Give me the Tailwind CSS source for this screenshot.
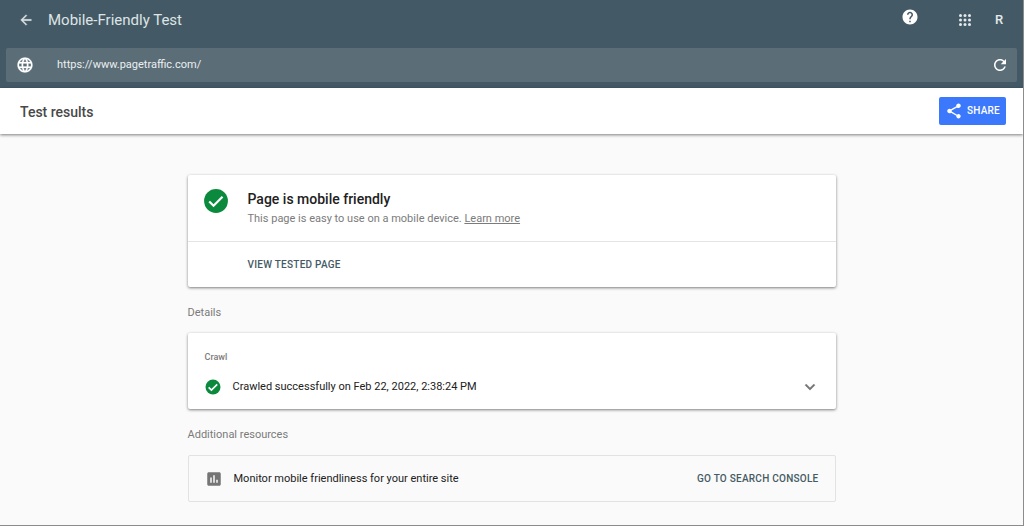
<!DOCTYPE html>
<html lang="en">
<head>
    <meta charset="UTF-8">
    <meta name="viewport" content="width=device-width, initial-scale=1.0">
    <title>Mobile-Friendly Test</title>
    <script src="https://cdn.jsdelivr.net/npm/@tailwindcss/browser@4"></script>
</head>
<body class="min-h-screen bg-[#fafafa] border-r border-b border-[#8c8c8c] font-[Roboto,sans-serif] text-[11px] leading-4 text-[#212121]">
    <!-- App header -->
    <header class="bg-[#435a66] px-1.5 pb-1.5">
        <div class="flex items-center h-12 pl-3 pr-[9px] pb-2">
            <button type="button" aria-label="Back" class="text-[#dfe3e5]">
                <svg class="size-4" viewBox="0 0 24 24" fill="currentColor" stroke="currentColor" stroke-width="0.5"><path d="M20 11H7.83l5.59-5.59L12 4l-8 8 8 8 1.41-1.41L7.83 13H20v-2z"/></svg>
            </button>
            <h1 class="ml-3.5 text-[15px] text-[#dfe3e5]">Mobile-Friendly Test</h1>
            <button type="button" aria-label="Help" class="ml-auto mb-1.5 text-white">
                <svg class="size-[18px]" viewBox="0 0 24 24" fill="currentColor"><path d="M12 2C6.48 2 2 6.48 2 12s4.48 10 10 10 10-4.48 10-10S17.52 2 12 2zm1 17h-2v-2h2v2zm2.07-7.75l-.9.92C13.45 12.9 13 13.5 13 15h-2v-.5c0-1.1.45-2.1 1.17-2.83l1.24-1.26c.37-.36.59-.86.59-1.41 0-1.1-.9-2-2-2s-2 .9-2 2H8c0-2.21 1.79-4 4-4s4 1.79 4 4c0 .88-.36 1.68-.93 2.25z"/></svg>
            </button>
            <button type="button" aria-label="Google apps" class="ml-[37px] text-[#e6e9eb]">
                <svg class="size-[18px]" viewBox="0 0 24 24" fill="currentColor"><circle cx="6" cy="6" r="2"/><circle cx="12" cy="6" r="2"/><circle cx="18" cy="6" r="2"/><circle cx="6" cy="12" r="2"/><circle cx="12" cy="12" r="2"/><circle cx="18" cy="12" r="2"/><circle cx="6" cy="18" r="2"/><circle cx="12" cy="18" r="2"/><circle cx="18" cy="18" r="2"/></svg>
            </button>
            <button type="button" aria-label="Account" class="ml-4 w-[18px] text-[13px] font-medium text-[#e6e9eb]">R</button>
        </div>
        <form class="flex items-center h-[34px] pl-2.5 pr-2 rounded-xs bg-[#5b6e78] text-white">
            <label for="url" aria-label="Page URL">
                <svg class="size-[18px]" viewBox="0 0 24 24" fill="currentColor" stroke="currentColor" stroke-width="0.3"><path d="M11.99 2C6.47 2 2 6.48 2 12s4.47 10 9.99 10C17.52 22 22 17.52 22 12S17.52 2 11.99 2zm6.93 6h-2.95c-.32-1.25-.78-2.45-1.38-3.56 1.84.63 3.37 1.91 4.33 3.56zM12 4.04c.83 1.2 1.48 2.53 1.91 3.96h-3.82c.43-1.43 1.08-2.76 1.91-3.96zM4.26 14C4.1 13.36 4 12.69 4 12s.1-1.36.26-2h3.38c-.08.66-.14 1.32-.14 2 0 .68.06 1.34.14 2H4.26zm.82 2h2.95c.32 1.25.78 2.45 1.38 3.56-1.84-.63-3.37-1.9-4.33-3.56zm2.95-8H5.08c.96-1.66 2.49-2.93 4.33-3.56C8.81 5.55 8.35 6.75 8.03 8zM12 19.96c-.83-1.2-1.48-2.53-1.91-3.96h3.82c-.43 1.43-1.08 2.76-1.91 3.96zM14.34 14H9.66c-.09-.66-.16-1.32-.16-2 0-.68.07-1.35.16-2h4.68c.09.65.16 1.32.16 2 0 .68-.07 1.34-.16 2zm.25 5.56c.6-1.11 1.06-2.31 1.38-3.56h2.95c-.96 1.65-2.49 2.93-4.33 3.56zM16.36 14c.08-.66.14-1.32.14-2 0-.68-.06-1.34-.14-2h3.38c.16.64.26 1.31.26 2s-.1 1.36-.26 2h-3.38z"/></svg>
            </label>
            <input id="url" type="text" aria-label="Page URL" value="https://www.pagetraffic.com/" class="flex-1 ml-[23px] text-[#eceff0] focus:outline-none">
            <button type="button" aria-label="Run test again">
                <svg class="size-[18px]" viewBox="0 0 24 24" fill="currentColor"><path d="M17.65 6.35C16.2 4.9 14.21 4 12 4c-4.42 0-7.99 3.58-7.99 8s3.57 8 7.99 8c3.73 0 6.84-2.55 7.73-6h-2.08c-.82 2.33-3.04 4-5.65 4-3.31 0-6-2.69-6-6s2.69-6 6-6c1.66 0 3.14.69 4.22 1.78L13 11h7V4l-2.35 2.35z"/></svg>
            </button>
        </form>
    </header>

    <!-- Results bar -->
    <div class="flex items-center justify-between h-[46px] pl-5 pr-[17px] bg-white shadow-[0_1px_3px_rgba(0,0,0,0.5)]">
        <h2 class="pt-0.5 text-sm font-medium text-[#484848]">Test results</h2>
        <button type="button" class="flex items-center h-7 px-1.5 gap-1 rounded-xs bg-[#3b78fc] text-[10px] font-medium tracking-wide text-white">
            <svg class="size-[18px]" viewBox="0 0 24 24" fill="currentColor"><path d="M18 16.08c-.76 0-1.44.3-1.96.77L8.91 12.7c.05-.23.09-.46.09-.7s-.04-.47-.09-.7l7.05-4.11c.54.5 1.25.81 2.04.81 1.66 0 3-1.34 3-3s-1.34-3-3-3-3 1.34-3 3c0 .24.04.47.09.7L8.04 9.81C7.5 9.31 6.79 9 6 9c-1.66 0-3 1.34-3 3s1.34 3 3 3c.79 0 1.5-.31 2.04-.81l7.12 4.16c-.05.21-.08.43-.08.65 0 1.61 1.31 2.92 2.92 2.92s2.92-1.31 2.92-2.92-1.31-2.92-2.92-2.92z"/></svg>
            SHARE
        </button>
    </div>

    <main class="max-w-[648px] mx-auto pt-[41px]">
        <!-- Verdict card -->
        <section class="rounded-xs bg-white shadow-[0_1px_3px_rgba(0,0,0,0.5)]">
            <div class="flex h-[67px] pt-3 pl-3.5 border-b border-[#e4e4e4]">
                <svg class="size-7" viewBox="0 0 24 24"><circle cx="12" cy="12" r="10.2" fill="#0b8a3e"/><path d="M6.2 12.4l3.7 3.7 7.7-7.7" fill="none" stroke="#fff" stroke-width="1.9"/></svg>
                <div class="ml-[18px]">
                    <h3 class="text-sm leading-6 font-medium">Page is mobile friendly</h3>
                    <p class="text-[#7b7b7b]">This page is easy to use on a mobile device. <a href="#" class="underline">Learn more</a></p>
                </div>
            </div>
            <div class="flex items-center h-[45px] pl-[60px]">
                <a href="#" class="text-[10px] font-medium tracking-wide text-[#455a64]">VIEW TESTED PAGE</a>
            </div>
        </section>

        <!-- Crawl details -->
        <h2 class="mt-[18px] mb-3 text-[#7b7b7b]">Details</h2>
        <section class="h-[76px] pt-4 px-4 rounded-xs bg-white shadow-[0_1px_3px_rgba(0,0,0,0.5)]">
            <h3 class="pl-px text-[9px] font-medium text-[#7b7b7b]">Crawl</h3>
            <div class="flex items-center mt-3">
                <svg class="size-[18px]" viewBox="0 0 24 24"><circle cx="12" cy="12" r="10" fill="#0b8a3e"/><path d="M6.2 12.4l3.7 3.7 7.7-7.7" fill="none" stroke="#fff" stroke-width="2.2"/></svg>
                <p class="ml-[11px]">Crawled successfully on Feb 22, 2022, 2:38:24 PM</p>
                <button type="button" aria-label="Show crawl details" class="ml-auto text-[#757575]">
                    <svg class="size-5" viewBox="0 0 24 24" fill="currentColor" stroke="currentColor" stroke-width="0.4"><path d="M7.41 8.34L12 12.92l4.59-4.58L18 9.75l-6 6-6-6z"/></svg>
                </button>
            </div>
        </section>

        <!-- Additional resources -->
        <h2 class="mt-[18px] mb-3 text-[#7b7b7b]">Additional resources</h2>
        <section class="flex items-center h-[47px] px-4 rounded-xs border border-[#e2e2e2]">
            <svg class="size-[18px] text-[#757575]" viewBox="0 0 24 24" fill="currentColor"><path d="M19 3H5c-1.1 0-2 .9-2 2v14c0 1.1.9 2 2 2h14c1.1 0 2-.9 2-2V5c0-1.1-.9-2-2-2zM9 17H7v-7h2v7zm4 0h-2V7h2v10zm4 0h-2v-4h2v4z"/></svg>
            <p class="ml-[11px]">Monitor mobile friendliness for your entire site</p>
            <a href="#" class="ml-auto text-[10px] font-medium tracking-wide text-[#455a64]">GO TO SEARCH CONSOLE</a>
        </section>
    </main>
</body>
</html>
